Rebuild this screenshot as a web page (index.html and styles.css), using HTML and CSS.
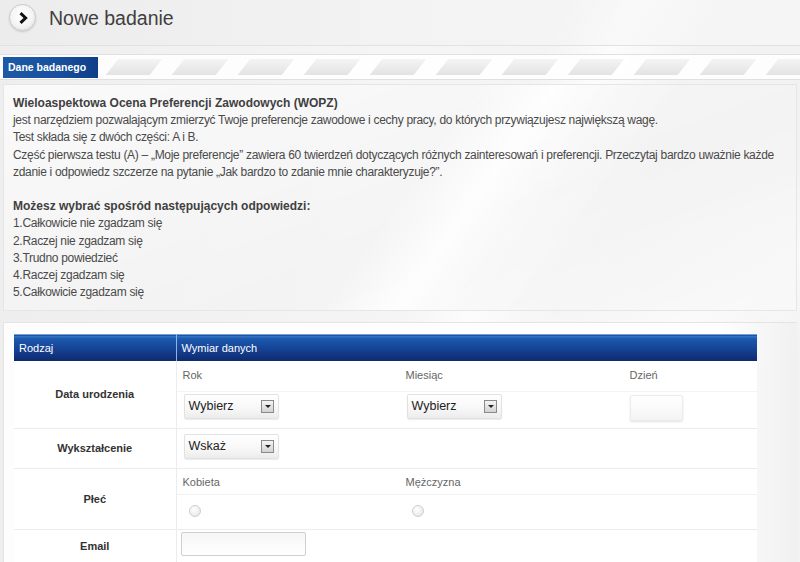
FILE: index.html
```html
<!DOCTYPE html>
<html lang="pl">
<head>
<meta charset="utf-8">
<title>Nowe badanie</title>
<link rel="stylesheet" href="styles.css">
</head>
<body>
<div class="page">
  <header class="top">
    <span class="circle-btn">
      <svg width="14" height="14" viewBox="0 0 14 14"><path d="M4.5 2.2 L9.6 7 L4.5 11.8" fill="none" stroke="#111" stroke-width="3" stroke-linejoin="miter"/></svg>
    </span>
    <h1 class="title">Nowe badanie</h1>
  </header>

  <div class="bar">
    <div class="tab">Dane badanego</div>
    <div class="stripes">
      <i></i><i></i><i></i><i></i><i></i><i></i><i></i><i></i><i></i><i></i><i></i>
    </div>
  </div>

  <section class="intro">
    <p class="lead">Wieloaspektowa Ocena Preferencji Zawodowych (WOPZ)</p>
    <p>jest narzędziem pozwalającym zmierzyć Twoje preferencje zawodowe i cechy pracy, do których przywiązujesz największą wagę.</p>
    <p>Test składa się z dwóch części: A i B.</p>
    <p>Część pierwsza testu (A) – „Moje preferencje” zawiera 60 twierdzeń dotyczących różnych zainteresowań i preferencji. Przeczytaj bardzo uważnie każde zdanie i odpowiedz szczerze na pytanie „Jak bardzo to zdanie mnie charakteryzuje?”.</p>
    <p class="spacer">&nbsp;</p>
    <p class="lead">Możesz wybrać spośród następujących odpowiedzi:</p>
    <p>1.Całkowicie nie zgadzam się</p>
    <p>2.Raczej nie zgadzam się</p>
    <p>3.Trudno powiedzieć</p>
    <p>4.Raczej zgadzam się</p>
    <p>5.Całkowicie zgadzam się</p>
  </section>

  <section class="form-panel">
    <table class="data">
      <thead>
        <tr><th class="c1">Rodzaj</th><th class="c2">Wymiar danych</th></tr>
      </thead>
      <tbody>
        <tr class="r-date">
          <td class="label">Data urodzenia</td>
          <td class="val">
            <div class="grid3">
              <div class="cap">Rok</div>
              <div class="cap">Miesiąc</div>
              <div class="cap">Dzień</div>
              <div class="ctl"><div class="sel"><span>Wybierz</span><b class="arr"></b></div></div>
              <div class="ctl"><div class="sel"><span>Wybierz</span><b class="arr"></b></div></div>
              <div class="ctl day"><div class="daybox"></div></div>
            </div>
          </td>
        </tr>
        <tr class="r-edu">
          <td class="label">Wykształcenie</td>
          <td class="val"><div class="ctl edu"><div class="sel"><span>Wskaż</span><b class="arr"></b></div></div></td>
        </tr>
        <tr class="r-sex">
          <td class="label">Płeć</td>
          <td class="val">
            <div class="grid2">
              <div class="cap">Kobieta</div>
              <div class="cap">Mężczyzna</div>
              <div class="rad"><span class="radio"></span></div>
              <div class="rad"><span class="radio"></span></div>
            </div>
          </td>
        </tr>
        <tr class="r-mail">
          <td class="label">Email</td>
          <td class="val"><div class="mail"><span class="input"></span></div></td>
        </tr>
      </tbody>
    </table>
  </section>
</div>
</body>
</html>
```

FILE: styles.css
```css
* { box-sizing: border-box; }
html, body { margin: 0; padding: 0; }
body {
  font-family: "Liberation Sans", Arial, sans-serif;
  color: #444;
  background:
    linear-gradient(118deg, rgba(255,255,255,0) 52%, rgba(255,255,255,0.75) 58%, rgba(255,255,255,0) 66%),
    linear-gradient(150deg, rgba(255,255,255,0) 60%, rgba(255,255,255,0.6) 70%, rgba(255,255,255,0) 80%),
    linear-gradient(90deg, #eeeeee 0%, #f5f5f5 50%, #f2f2f2 100%);
  width: 800px;
  height: 562px;
  overflow: hidden;
}
.page { width: 800px; height: 562px; overflow: hidden; }

.top {
  height: 46px;
  display: flex;
  align-items: flex-start;
  padding: 4px 0 0 9px;
  border-bottom: 1px solid #e2e2e2;
  background: linear-gradient(90deg, rgba(235,235,235,0.6), rgba(250,250,250,0.4));
}
.circle-btn {
  width: 27px;
  height: 27px;
  border-radius: 50%;
  border: 1px solid #c9c9c9;
  background: radial-gradient(circle at 45% 40%, #ffffff 0%, #f4f4f4 55%, #dcdcdc 100%);
  box-shadow: 0 1px 2px rgba(0,0,0,0.15);
  display: flex;
  align-items: center;
  justify-content: center;
}
.title {
  margin: 2px 0 0 13px;
  font-family: "Liberation Sans", Arial, sans-serif;
  font-weight: normal;
  font-size: 19.5px;
  line-height: 24px;
  color: #3f3f3f;
}

.bar {
  margin-top: 8px;
  height: 26px;
  border-top: 1px solid #e0e0e0;
  border-bottom: 1px solid #e0e0e0;
  background: rgba(255,255,255,0.85);
  display: flex;
  align-items: center;
  padding-left: 3px;
  overflow: hidden;
}
.tab {
  flex: 0 0 95px;
  width: 95px;
  height: 21px;
  background: linear-gradient(90deg, #1d5aa6 0%, #174f9c 60%, #0f3e88 100%);
  color: #fff;
  font-size: 10.5px;
  font-weight: bold;
  line-height: 21px;
  padding-left: 5px;
  white-space: nowrap;
}
.stripes {
  display: flex;
  gap: 22px;
  padding-left: 14px;
  height: 16px;
  flex: 0 0 auto;
}
.stripes i {
  display: block;
  flex: 0 0 44px;
  width: 44px;
  height: 16px;
  transform: skewX(-38deg);
  background: linear-gradient(180deg, #f4f4f4 0%, #e3e3e3 100%);
}

.intro {
  margin: 4px 3px 0 3px;
  padding: 10px 8px 9px 9px;
  border: 1px solid #e6e6e6;
  background:
    linear-gradient(125deg, rgba(255,255,255,0) 50%, rgba(255,255,255,0.85) 58%, rgba(255,255,255,0.2) 64%, rgba(255,255,255,0) 72%),
    linear-gradient(160deg, rgba(255,255,255,0.7) 0%, rgba(255,255,255,0.2) 60%, rgba(255,255,255,0.5) 100%),
    rgba(238,238,238,0.6);
  font-size: 12px;
  line-height: 17.2px;
  letter-spacing: -0.3px;
  color: #4a4a4a;
}
.intro p { margin: 0; }
.intro .lead { font-weight: bold; color: #404040; letter-spacing: 0; }

.form-panel {
  margin: 11px 3px 0 3px;
  padding: 11px 0 0 10px;
  border-top: 1px solid #e4e4e4;
  border-left: 1px solid #e4e4e4;
  background: linear-gradient(90deg, rgba(255,255,255,0.9) 0%, rgba(255,255,255,0.9) 90%, rgba(240,240,240,0.8) 100%);
  height: 240px;
  overflow: hidden;
}

.data {
  width: 743px;
  border-collapse: collapse;
  background: #fff;
  font-size: 11px;
}
.data th {
  height: 26px;
  padding: 0 0 0 5px;
  text-align: left;
  font-weight: normal;
  color: #fff;
  background: linear-gradient(180deg, #3a7ed0 0%, #1c59ac 12%, #16479a 45%, #11307a 85%, #0d2a6a 100%);
  border-top: 1px solid #6fa3e0;
}
.data th.c1 { width: 162px; border-right: 1px solid #8fb3e0; }
.data td { padding: 0; border-bottom: 1px solid #ececec; vertical-align: top; }
.data td.label {
  text-align: center;
  vertical-align: middle;
  font-weight: bold;
  color: #333;
  border-right: 1px solid #ececec;
}
.r-date td.label { padding-bottom: 0; }
.r-date td { height: 67px; }
.r-edu td { height: 40px; }
.r-sex td { height: 60px; }
.r-mail td { height: 33px; }

.grid3 {
  display: grid;
  grid-template-columns: 223px 224px 1fr;
  grid-template-rows: 30px 37px;
}
.grid2 {
  display: grid;
  grid-template-columns: 223px 1fr;
  grid-template-rows: 26px 34px;
}
.cap {
  padding: 7px 0 0 6px;
  color: #666;
  font-size: 11px;
  line-height: 14px;
}
.grid2 .cap { padding-top: 6px; border-bottom: 1px solid #f2f2f2; }
.ctl { padding: 2px 0 0 7px; }
.ctl.day { padding-left: 6px; padding-top: 3px; }
.grid3 .ctl { border-top: 1px solid #f4f4f4; }
.edu { padding-top: 5px; }

.sel {
  width: 95px;
  height: 25px;
  border: 1px solid #e2e2e2;
  border-radius: 2px;
  background: linear-gradient(180deg, #ffffff 0%, #f7f7f7 60%, #ececec 100%);
  box-shadow: 0 1px 1px rgba(0,0,0,0.08);
  display: flex;
  align-items: center;
  justify-content: space-between;
  padding: 0 4px 0 4px;
  font-size: 12.5px;
  color: #222;
}
.arr {
  width: 13px;
  height: 13px;
  border: 1px solid #8a8a8a;
  background: linear-gradient(180deg, #f4f4f4, #d2d2d2);
  position: relative;
}
.arr::after {
  content: "";
  position: absolute;
  left: 3px;
  top: 4px;
  border-left: 3px solid transparent;
  border-right: 3px solid transparent;
  border-top: 3px solid #222;
}
.daybox {
  width: 53px;
  height: 26px;
  border: 1px solid #ececec;
  border-radius: 2px;
  background: linear-gradient(180deg, #ffffff, #f4f4f4);
  box-shadow: 0 1px 2px rgba(0,0,0,0.12);
}

.rad { padding: 10px 0 0 12px; }
.radio {
  display: block;
  width: 12px;
  height: 12px;
  border-radius: 50%;
  border: 1px solid #cfcfcf;
  background: radial-gradient(circle at 40% 35%, #ffffff 0%, #eeeeee 60%, #d9d9d9 100%);
}

.mail { padding: 2px 0 0 4px; }
.input {
  display: block;
  width: 125px;
  height: 24px;
  border: 1px solid #cfcfcf;
  border-radius: 2px;
  background: linear-gradient(180deg, #f6f6f6, #ffffff);
}
```
